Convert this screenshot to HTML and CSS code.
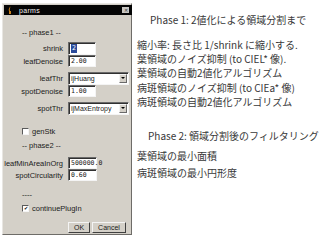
FILE: index.html
```html
<!DOCTYPE html>
<html lang="ja">
<head>
    <meta charset="UTF-8">
    <title>parms</title>
    <link rel="stylesheet" href="styles.css">
</head>
<body>
    <div class="dialog">
        <div class="titlebar">
            <svg class="cup" width="4" height="8" viewBox="0 0 4 8">
                <path d="M2 0 C3 2 1 3 2 5 L3 5 L3 8 L1 8 L1 5 C0 3 2 2 2 0 Z" fill="#c8801e"/>
            </svg>
            <span class="title">parms</span>
            <span class="close">&#x2715;</span>
        </div>
        <div class="content">
            <div class="section">-- phase1 --</div>
            <div class="row first">
                <span class="label">shrink</span>
                <span class="field tall"><span class="sel">2</span></span>
            </div>
            <div class="row">
                <span class="label">leafDenoise</span>
                <span class="field">2.00</span>
            </div>
            <div class="row spaced">
                <span class="label">leafThr</span>
                <span class="select"><span class="value">ijHuang</span><span class="arrow"></span></span>
            </div>
            <div class="row">
                <span class="label">spotDenoise</span>
                <span class="field">1.00</span>
            </div>
            <div class="row spaced">
                <span class="label">spotThr</span>
                <span class="select"><span class="value">ijMaxEntropy</span><span class="arrow"></span></span>
            </div>
            <div class="check gen">
                <span class="box"></span>
                <span>genStk</span>
            </div>
            <div class="section phase2">-- phase2 --</div>
            <div class="row first2">
                <span class="label">leafMinAreaInOrg</span>
                <span class="field wide">500000.0</span>
            </div>
            <div class="row">
                <span class="label">spotCircularity</span>
                <span class="field wide">0.60</span>
            </div>
            <div class="section dashes">----</div>
            <div class="check cont">
                <span class="box checked">&#x2714;</span>
                <span>continuePlugIn</span>
            </div>
            <div class="buttons">
                <span class="button ok">OK</span>
                <span class="button cancel">Cancel</span>
            </div>
        </div>
    </div>

    <div class="notes">
        <div class="heading">Phase 1: 2値化による領域分割まで</div>
        <div class="list">
            <div>縮小率: 長さ比 1/shrink に縮小する.</div>
            <div>葉領域のノイズ抑制 (to CIEL* 像).</div>
            <div>葉領域の自動2値化アルゴリズム</div>
            <div>病斑領域のノイズ抑制 (to CIEa* 像)</div>
            <div>病斑領域の自動2値化アルゴリズム</div>
        </div>
        <div class="heading second">Phase 2: 領域分割後のフィルタリング</div>
        <div class="list loose">
            <div>葉領域の最小面積</div>
            <div>病斑領域の最小円形度</div>
        </div>
    </div>
</body>
</html>
```

FILE: styles.css
```css
* {
    margin: 0;
    padding: 0;
    box-sizing: border-box;
}
body {
    width: 320px;
    height: 240px;
    overflow: hidden;
    background: #fff;
    display: flex;
    align-items: flex-start;
}
.dialog {
    margin: 3px 0 0 2px;
    width: 130px;
    height: 232px;
    background: #d4d0c8;
    border: 1px solid;
    border-color: #e8e6e2 #6e6c68 #6e6c68 #e8e6e2;
    font-family: "Liberation Sans", Arial, sans-serif;
    font-size: 7.5px;
    color: #202020;
}
.titlebar {
    height: 10px;
    margin: 1px 0 0 1px;
    width: 128px;
    background: #050505;
    display: flex;
    align-items: center;
    padding-left: 4px;
}
.cup {
    margin-right: 7px;
}
.title {
    color: #f2f2f2;
    font-size: 7px;
    letter-spacing: 0.3px;
}
.close {
    margin-left: auto;
    margin-right: 3px;
    width: 7px;
    height: 6px;
    background: #c8c6c2;
    color: #333;
    font-size: 5px;
    line-height: 6px;
    text-align: center;
}
.content {
    display: flex;
    flex-direction: column;
}
.section {
    padding-left: 19px;
    height: 10px;
    line-height: 10px;
    margin-top: 13px;
}
.section.phase2 {
    margin-top: 5px;
}
.section.dashes {
    margin-top: 9px;
}
.row {
    display: grid;
    grid-template-columns: 60px auto;
    column-gap: 5px;
    align-items: center;
    justify-content: start;
}
.row.first {
    margin-top: 4px;
}
.row.first2 {
    margin-top: 6px;
}
.row.spaced {
    margin-top: 5px;
}
.label {
    text-align: right;
    white-space: nowrap;
}
.field,
.select {
    height: 12px;
    background: #fff;
    border: 1px solid;
    border-color: #6a6a6a #f4f4f4 #f4f4f4 #6a6a6a;
    box-shadow: inset 1px 1px 0 #303030;
    font-family: "DejaVu Sans Mono", monospace;
    font-size: 6.5px;
    line-height: 10px;
    padding-left: 2px;
    display: flex;
    align-items: center;
}
.field {
    width: 28px;
}
.field.tall {
    height: 13px;
}
.field.wide {
    width: 29px;
}
.sel {
    background: #2a4a9a;
    color: #fff;
    padding: 0 1px;
    line-height: 9px;
}
.select {
    width: 61px;
    height: 13px;
    font-family: "Liberation Sans", Arial, sans-serif;
    font-size: 7px;
}
.value {
    flex: 1;
}
.arrow {
    width: 8px;
    height: 9px;
    margin-right: 1px;
    background: #d4d0c8;
    border: 1px solid;
    border-color: #f4f4f4 #6a6a6a #6a6a6a #f4f4f4;
    position: relative;
}
.arrow::after {
    content: '';
    position: absolute;
    left: 1px;
    top: 2px;
    border-left: 2px solid transparent;
    border-right: 2px solid transparent;
    border-top: 2px solid #000;
}
.check {
    display: flex;
    align-items: center;
    padding-left: 19px;
    height: 10px;
    gap: 3px;
}
.check.gen {
    margin-top: 11px;
}
.check.cont {
    margin-top: 3px;
}
.box {
    width: 7px;
    height: 7px;
    background: #fff;
    border: 1px solid;
    border-color: #5a5a5a #f4f4f4 #f4f4f4 #5a5a5a;
    font-size: 5px;
    line-height: 5px;
    text-align: center;
    color: #000;
}
.buttons {
    display: flex;
    gap: 2px;
    padding-left: 65px;
    margin-top: 9px;
}
.button {
    height: 11px;
    line-height: 9px;
    font-size: 7px;
    text-align: center;
    background: #d4d0c8;
    border: 1px solid;
    border-color: #f4f4f4 #404040 #404040 #f4f4f4;
}
.button.ok {
    width: 22px;
}
.button.cancel {
    width: 34px;
}
.notes {
    margin-left: 5px;
    font-family: "Noto Sans CJK JP", sans-serif;
    font-size: 10px;
    color: #383838;
    white-space: nowrap;
}
.heading {
    height: 14px;
    line-height: 14px;
    margin-top: 13px;
    padding-left: 13px;
}
.heading.second {
    margin-top: 20px;
    padding-left: 11px;
}
.list {
    margin-top: 11px;
    line-height: 14.2px;
}
.list.loose {
    margin-top: 4px;
    line-height: 17px;
}
```
